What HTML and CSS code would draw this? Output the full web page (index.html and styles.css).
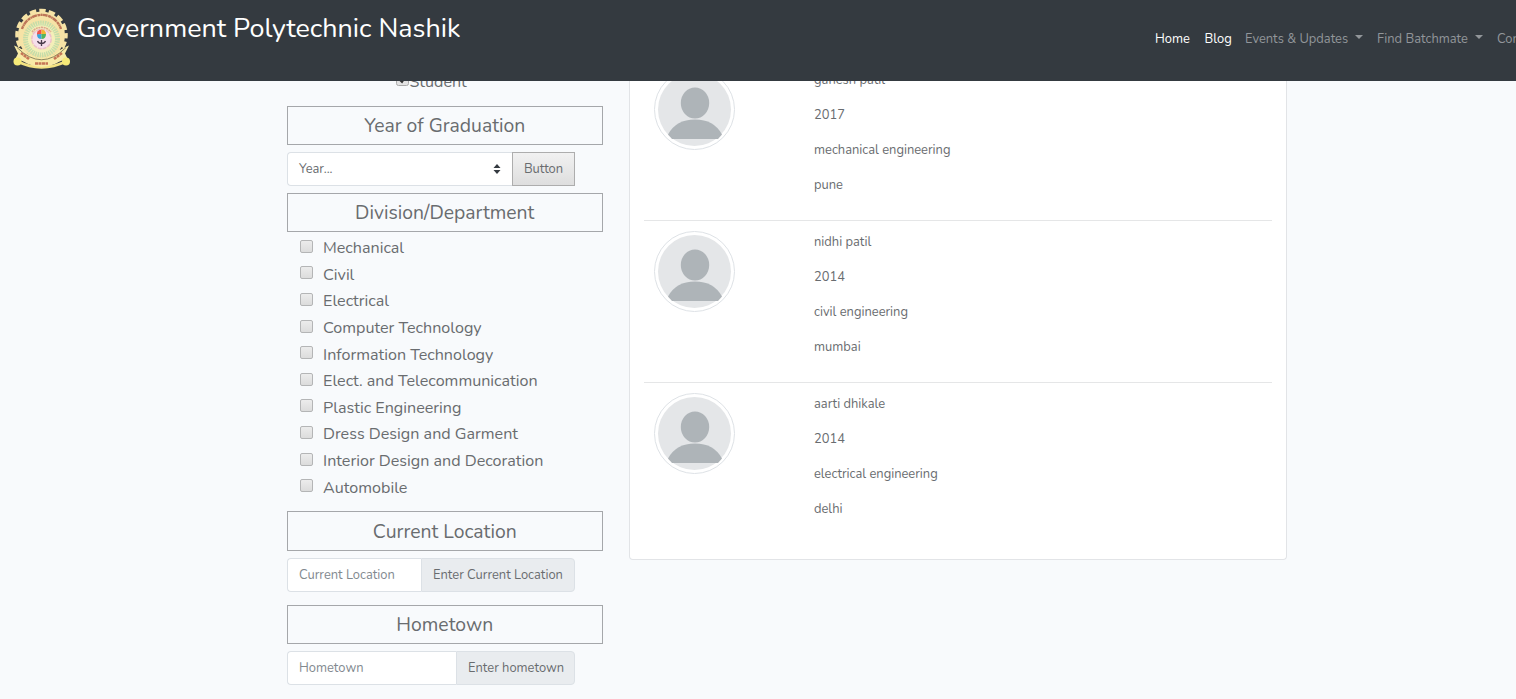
FILE: index.html
```html
<!DOCTYPE html>
<html lang="en">
<head>
<meta charset="utf-8">
<title>Government Polytechnic Nashik</title>
<link rel="stylesheet" href="styles.css">
</head>
<body>
<header class="navbar">
  <div class="brand">
    <svg class="logo" viewBox="0 0 58 62">
      <circle cx="28.500" cy="27" r="23.500" fill="#f6e3a6"/>
      <circle cx="28.500" cy="27" r="24.500" fill="none" stroke="#f6e3a6" stroke-width="3.500" stroke-dasharray="6.500 3.120" stroke-dashoffset="3"/>
      <path d="M9 21A20.500 20.500 0 0 1 48 21" fill="none" stroke="#bd7658" stroke-width="2.400" stroke-dasharray="3 .4 1.500 .3 5 .6"/>
      <circle cx="28.500" cy="31" r="16" fill="#f4efb8" stroke="#c5dda9" stroke-width="5" stroke-dasharray="1.500 .8"/>
      <path d="M19 24A12 12 0 0 1 38 24" fill="none" stroke="#dda68d" stroke-width="1.500" stroke-dasharray="2 .6"/>
      <circle cx="28.500" cy="31" r="9.500" fill="#f6dfeb"/>
      <circle cx="28.500" cy="31" r="9.700" fill="none" stroke="#eebfc9" stroke-width="1.500" stroke-dasharray="4 1"/>
      <path d="M28.500 21.500a4.500 4.500 0 0 0-4.500 5.500l4.500-1z" fill="#ef554a"/>
      <path d="M28.500 21.500a4.500 4.500 0 0 1 4.500 4.500l-4.500 1z" fill="#f2b632"/>
      <path d="M24 26.500q0 4.500 4.500 4.500v-5z" fill="#36a6db"/>
      <path d="M33 26q0 5-4.500 5v-5z" fill="#55b45c"/>
      <path d="M24.500 33q1 2.500 4 2.500t4-2.500M28.500 32v6" fill="none" stroke="#4a3c4c" stroke-width="1.300"/>
      <path d="M4.500 53.500Q28.500 65 53 53.500" fill="none" stroke="#f3e283" stroke-width="3"/>
      <path d="M1 37.500q5 1.500 9 4.500 18.500 16 37 0 4-3 9-4.500l-4 8 3 6q-7 .5-12 4-14.500 7-29 0-5-3.500-12-4l3-6z" fill="#f8eaa6"/>
      <path d="M4 39.500Q28.500 64 53 39.500" fill="none" stroke="#5d5a43" stroke-width=".7"/>
      <path d="M8 45l8 6M22 55.500h13M41 51l8-6" stroke="#c57656" stroke-width="2.600" stroke-dasharray="3 .5"/>
      <circle cx="4.500" cy="53.500" r="4" fill="#f6ea78"/><circle cx="53" cy="53.500" r="4" fill="#f6ea78"/>
    </svg>
    <h1 class="title">Government Polytechnic Nashik</h1>
  </div>
  <nav class="links">
    <a class="link link-active home">Home</a>
    <a class="link link-active blog">Blog</a>
    <a class="link events">Events &amp; Updates<i class="caret"></i></a>
    <a class="link batch">Find Batchmate<i class="caret"></i></a>
    <a class="link">Contact Us</a>
  </nav>
</header>
<main class="page">
  <aside class="filters">
    <label class="student"><svg class="check" viewBox="0 0 13 13"><rect x=".5" y=".5" width="12" height="12" rx="2" fill="#e3e3e3" stroke="#aaa"/><path d="M3 6l3 3 4-6" fill="none" stroke="#333" stroke-width="2"/></svg><span>Student</span></label>
    <h2 class="heading">Year of Graduation</h2>
    <div class="group">
      <div class="field select"><span>Year...</span><svg class="arrows" viewBox="0 0 8 10"><path d="M.5 4L4 0l3.500 4zM.5 6L4 10l3.500-4z" fill="#343a40"/></svg></div>
      <div class="button">Button</div>
    </div>
    <h2 class="heading heading-division">Division/Department</h2>
    <div class="options">
      <label class="option"><i class="box"></i><span>Mechanical</span></label>
      <label class="option"><i class="box"></i><span>Civil</span></label>
      <label class="option"><i class="box"></i><span>Electrical</span></label>
      <label class="option"><i class="box"></i><span>Computer Technology</span></label>
      <label class="option"><i class="box"></i><span>Information Technology</span></label>
      <label class="option"><i class="box"></i><span>Elect. and Telecommunication</span></label>
      <label class="option"><i class="box"></i><span>Plastic Engineering</span></label>
      <label class="option"><i class="box"></i><span>Dress Design and Garment</span></label>
      <label class="option"><i class="box"></i><span>Interior Design and Decoration</span></label>
      <label class="option"><i class="box"></i><span>Automobile</span></label>
    </div>
    <h2 class="heading heading-tall">Current Location</h2>
    <div class="group group-location">
      <div class="field hint">Current Location</div>
      <div class="addon addon-location">Enter Current Location</div>
    </div>
    <h2 class="heading">Hometown</h2>
    <div class="group">
      <div class="field hint">Hometown</div>
      <div class="addon addon-home">Enter hometown</div>
    </div>
  </aside>
  <section class="card">
    <article class="person">
      <svg class="avatar" viewBox="0 0 81 81"><circle cx="40.500" cy="40.500" r="40" fill="#fff" stroke="#dee2e6"/><circle cx="40.500" cy="40.500" r="36.500" fill="#e4e6e8"/><ellipse cx="41" cy="34" rx="14.200" ry="15.500" fill="#aeb4b8"/><path d="M14 65.500Q22 50.500 41 50.500T68 65.500L64 70H18z" fill="#aeb4b8"/></svg>
      <div class="details"><p>ganesh patil</p><p>2017</p><p>mechanical engineering</p><p>pune</p></div>
    </article>
    <article class="person">
      <svg class="avatar" viewBox="0 0 81 81"><circle cx="40.500" cy="40.500" r="40" fill="#fff" stroke="#dee2e6"/><circle cx="40.500" cy="40.500" r="36.500" fill="#e4e6e8"/><ellipse cx="41" cy="34" rx="14.200" ry="15.500" fill="#aeb4b8"/><path d="M14 65.500Q22 50.500 41 50.500T68 65.500L64 70H18z" fill="#aeb4b8"/></svg>
      <div class="details"><p>nidhi patil</p><p>2014</p><p>civil engineering</p><p>mumbai</p></div>
    </article>
    <article class="person">
      <svg class="avatar" viewBox="0 0 81 81"><circle cx="40.500" cy="40.500" r="40" fill="#fff" stroke="#dee2e6"/><circle cx="40.500" cy="40.500" r="36.500" fill="#e4e6e8"/><ellipse cx="41" cy="34" rx="14.200" ry="15.500" fill="#aeb4b8"/><path d="M14 65.500Q22 50.500 41 50.500T68 65.500L64 70H18z" fill="#aeb4b8"/></svg>
      <div class="details"><p>aarti dhikale</p><p>2014</p><p>electrical engineering</p><p>delhi</p></div>
    </article>
  </section>
</main>
</body>
</html>
```
FILE: styles.css
```css
* { box-sizing: border-box; }
body {
  margin: 0;
  height: 699px;
  overflow: hidden;
  background: #f8fafc;
  color: #696c6f;
  font: 12.9px/20px Nunito, Lato, sans-serif;
}
.navbar {
  position: relative;
  z-index: 1;
  display: flex;
  height: 81px;
  overflow: hidden;
  background: #343a40;
  white-space: nowrap;
}
.brand { display: flex; flex: none; width: 1155px; padding: 8px 0 0 13px; }
.logo { width: 58px; height: 62px; }
.title { margin: 2px 0 0 6px; color: #fff; font-size: 26.9px; line-height: 36px; font-weight: 400; }
.links { display: flex; flex: none; align-items: center; height: 77px; }
.link { display: flex; align-items: center; color: #92969a; }
.link-active { color: #fff; }
.home { width: 49.500px; }
.blog { width: 40.500px; }
.events { width: 132px; }
.batch { width: 120px; }
.caret { margin: -3px 0 0 7px; border: 4px solid transparent; border-top-color: currentColor; border-bottom: 0; }
.page { display: flex; margin-top: -20px; padding-left: 287px; }
.filters { width: 315.500px; margin-right: 26.500px; padding-top: 10px; }
.student { display: flex; align-items: center; height: 22px; margin-bottom: 13px; padding-left: 108.500px; font-size: 16.100px; }
.check { width: 13px; height: 13px; margin: -5px 1px 0 0; }
.heading {
  height: 39px;
  margin: 0 0 7px;
  border: 1px solid #a5a7aa;
  text-align: center;
  font-size: 19.350px;
  line-height: 38px;
  font-weight: 400;
}
.heading-division { margin-bottom: 0; }
.heading-tall { height: 40px; line-height: 39px; }
.group { display: flex; width: 288px; height: 34px; margin-bottom: 7px; }
.group-location { margin-bottom: 13px; }
.field {
  display: flex;
  flex: 1;
  align-items: center;
  padding: 0 11px;
  border: 1px solid #dce1e6;
  border-right: 0;
  border-radius: 4px 0 0 4px;
  background: #fff;
}
.hint { color: #82898f; }
.select { justify-content: space-between; }
.arrows { width: 8px; height: 10px; }
.button { width: 63px; border: 1px solid #adadad; background: linear-gradient(#f1f1f1, #dedede); line-height: 32px; text-align: center; }
.addon { padding-left: 11px; border: 1px solid #dce1e6; border-radius: 0 4px 4px 0; background: #e9ecef; line-height: 32px; white-space: nowrap; }
.addon-location { width: 154px; }
.addon-home { width: 119px; }
.options { height: 279px; padding: 3px 0 0 13px; }
.option { display: flex; align-items: center; height: 26.600px; font-size: 16.120px; white-space: nowrap; }
.box { width: 13px; height: 13px; margin: -4px 10px 0 0; border: 1px solid #b4b5b6; border-radius: 2px; background: linear-gradient(#ececec, #dcdcdc); }
.card { width: 657.500px; height: 499px; padding: 0 14px; border: 1px solid #e2e4e7; border-top: 0; border-radius: 0 0 4px 4px; background: #fff; }
.person { display: flex; height: 162px; padding-left: 10px; border-top: 1px solid #e5e6e7; }
.person:first-child { margin-top: -3px; }
.avatar { width: 81px; height: 81px; margin: 10px 79px 0 0; }
.details { padding-top: 4px; }
.details p { margin: 0; height: 35px; line-height: 35px; }
```
